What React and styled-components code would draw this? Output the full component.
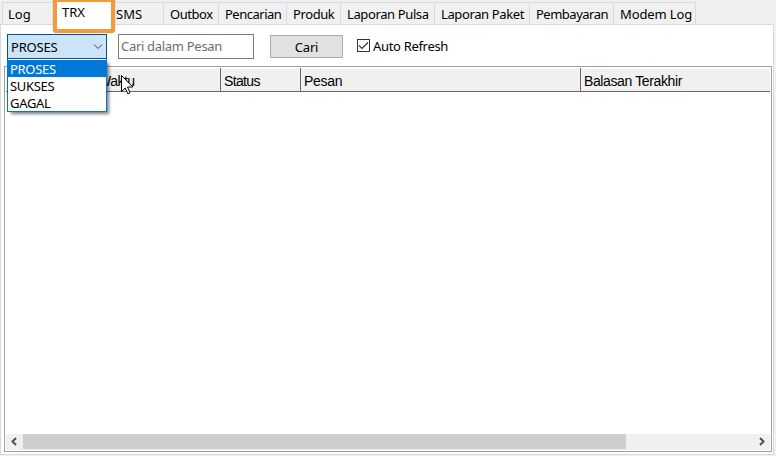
import React from 'react';
import styled, { createGlobalStyle } from 'styled-components';

const Global = createGlobalStyle`
  * { box-sizing: border-box; }
  html, body { margin: 0; padding: 0; overflow: hidden; }
  body { font: 13px/17px "Noto Sans", "Open Sans", sans-serif; color: #000; }
`;
const Window = styled.main`
  width: 776px; height: 456px; padding: 2px 2px 1px 0; background: #f0f0f0;
  display: flex; flex-direction: column; overflow: hidden; position: relative;
`;
const TabBar = styled.nav`
  display: flex; height: 22px; padding-left: 2px; flex: none;
`;
const Tab = styled.div`
  width: ${p => p.$width}px; height: 22px; flex: none;
  border: solid #d9d9d9; border-width: 1px 0 0 1px;
  padding: 3px 0 0 ${p => p.$pad ?? 6}px; white-space: nowrap;
  letter-spacing: ${p => p.$track ?? 0}px;
  &:last-child { border-right-width: 1px; }
`;
const ActiveTab = styled.div`
  position: absolute; left: 53px; top: -2px; width: 62px; height: 35px;
  border: 4px solid #f39a3b; border-radius: 4px; background: #fff;
  box-shadow: 0 0 1px 0 #8b7355; padding: 2px 0 0 5px;
`;
const Panel = styled.section`
  flex: 1; min-height: 0; background: #fff; border: 1px solid #d9d9d9;
  padding: 9px 1px 2px 3px; display: flex; flex-direction: column;
`;
const Toolbar = styled.div`
  display: flex; height: 32px; padding-left: 3px; flex: none;
`;
const Combo = styled.div`
  width: 100px; height: 25px; border: 1px solid #005499; background: #cce4f7;
  padding: 4px 3px 0 3px; display: flex; justify-content: space-between;
  letter-spacing: -0.2px; flex: none;
  svg { margin-top: 4px; }
`;
const Search = styled.input`
  width: 136px; height: 25px; margin-left: 11px; border: 1px solid #7a7a7a;
  padding: 0 0 1px 2px; font: inherit; letter-spacing: -0.3px;
  border-radius: 0; outline: 0; background: #fff;
  &::placeholder { color: #6d6d6d; opacity: 1; }
`;
const Button = styled.button`
  width: 73px; height: 23px; margin: 1px 0 0 16px; border: 1px solid #adadad;
  background: #e1e1e1; font: inherit; color: #000; padding: 1px 0 0; line-height: 17px;
  letter-spacing: -0.2px;
`;
const Check = styled.label`
  display: flex; gap: 3px; margin: 4px 0 0 14px; white-space: nowrap;
  letter-spacing: -0.32px;
  svg { margin-top: 1px; }
`;
const List = styled.div`
  flex: 1; min-height: 0; border: 1px solid #a0a0a8; padding: 1px 1px 1px;
  display: flex; flex-direction: column;
`;
const Header = styled.div`
  display: flex; height: 24px; border-bottom: 1px solid #696969; flex: none;
  font: 14px/16px "Liberation Sans", Arial, sans-serif;
`;
const Column = styled.div`
  width: ${p => p.$width}px; flex: ${p => (p.$width ? 'none' : '1')};
  border-right: ${p => (p.$width ? '1px solid #696969' : '0')};
  background: linear-gradient(#fff 1px, #f0f0f0 1px);
  padding: 5px 0 0 ${p => p.$pad ?? 3}px;
  letter-spacing: ${p => p.$track ?? 0}px; white-space: nowrap;
`;
const Body = styled.div`flex: 1;`;
const ScrollBar = styled.div`
  height: 16px; display: flex; background: #f0f0f0; flex: none;
`;
const Arrow = styled.svg`width: 17px; height: 15px; flex: none;`;
const Track = styled.div`flex: 1;`;
const Thumb = styled.div`width: 603px; height: 15px; background: #cdcdcd;`;
const Menu = styled.ul`
  position: absolute; left: 7px; top: 59px; width: 100px; height: 53px;
  margin: 0; padding: 1px 0 0; list-style: none; background: #fff;
  border: 1px solid #0078d7; border-top: 0; box-shadow: 3px 3px 3px -1px rgba(0,0,0,.5);
`;
const Option = styled.li`
  height: 17px; padding-left: 2px; line-height: 19px;
  background: ${p => (p.$selected ? '#0078d7' : '#fff')};
  color: ${p => (p.$selected ? '#fff' : '#000')};
  letter-spacing: -0.3px;
`;
const Cursor = styled.svg`
  position: absolute; left: 121px; top: 75px; width: 13px; height: 20px;
`;

const tabs = [
  { label: 'Log', width: 54, pad: 5 },
  { label: '', width: 53 },
  { label: 'SMS', width: 54 },
  { label: 'Outbox', width: 55, track: -0.45 },
  { label: 'Pencarian', width: 68, track: -0.5 },
  { label: 'Produk', width: 54, track: -0.4 },
  { label: 'Laporan Pulsa', width: 94, track: -0.38 },
  { label: 'Laporan Paket', width: 95, track: -0.38 },
  { label: 'Pembayaran', width: 84, track: -0.5 },
  { label: 'Modem Log', width: 83, track: -0.12 },
];
const options = [
  { label: 'PROSES', selected: true },
  { label: 'SUKSES' },
  { label: 'GAGAL' },
];

export default function App() {
  return (
    <>
      <Global />
      <Window>
        <TabBar>
          {tabs.map((t, i) => (
            <Tab key={i} $width={t.width} $pad={t.pad} $track={t.track}>{t.label}</Tab>
          ))}
        </TabBar>
        <Panel>
          <Toolbar>
            <Combo>
              PROSES
              <svg width="10" height="8" fill="none" stroke="#444"><path d="M1 1.5 L5 5.5 L9 1.5" /></svg>
            </Combo>
            <Search placeholder="Cari dalam Pesan" />
            <Button>Cari</Button>
            <Check>
              <svg width="13" height="13" fill="none" stroke="#333">
                <rect x=".5" y=".5" width="12" height="12" />
                <path d="M2 6.5 L5 9.5 L11 3.5" strokeWidth="1.2" />
              </svg>
              Auto Refresh
            </Check>
          </Toolbar>
          <List>
            <Header>
              <Column $width={215} $pad={92} $track={-0.5}>Waktu</Column>
              <Column $width={80} $track={-0.65}>Status</Column>
              <Column $width={280} $track={-0.3}>Pesan</Column>
              <Column $track={-0.38}>Balasan Terakhir</Column>
            </Header>
            <Body />
            <ScrollBar>
              <Arrow fill="none" stroke="#505050" strokeWidth="2"><path d="M10 4 L6.5 7.5 L10 11" /></Arrow>
              <Track><Thumb /></Track>
              <Arrow fill="none" stroke="#505050" strokeWidth="2"><path d="M7 4 L10.5 7.5 L7 11" /></Arrow>
            </ScrollBar>
          </List>
        </Panel>
        <ActiveTab>TRX</ActiveTab>
        <Menu>
          {options.map(o => <Option key={o.label} $selected={o.selected}>{o.label}</Option>)}
        </Menu>
        <Cursor viewBox="0 0 13 20">
          <path d="M.5 .5 V16.5 L4.2 13 L6.8 18.8 L9 17.8 L6.5 12 H11.8 Z" fill="#fff" stroke="#000" />
        </Cursor>
      </Window>
    </>
  );
}
